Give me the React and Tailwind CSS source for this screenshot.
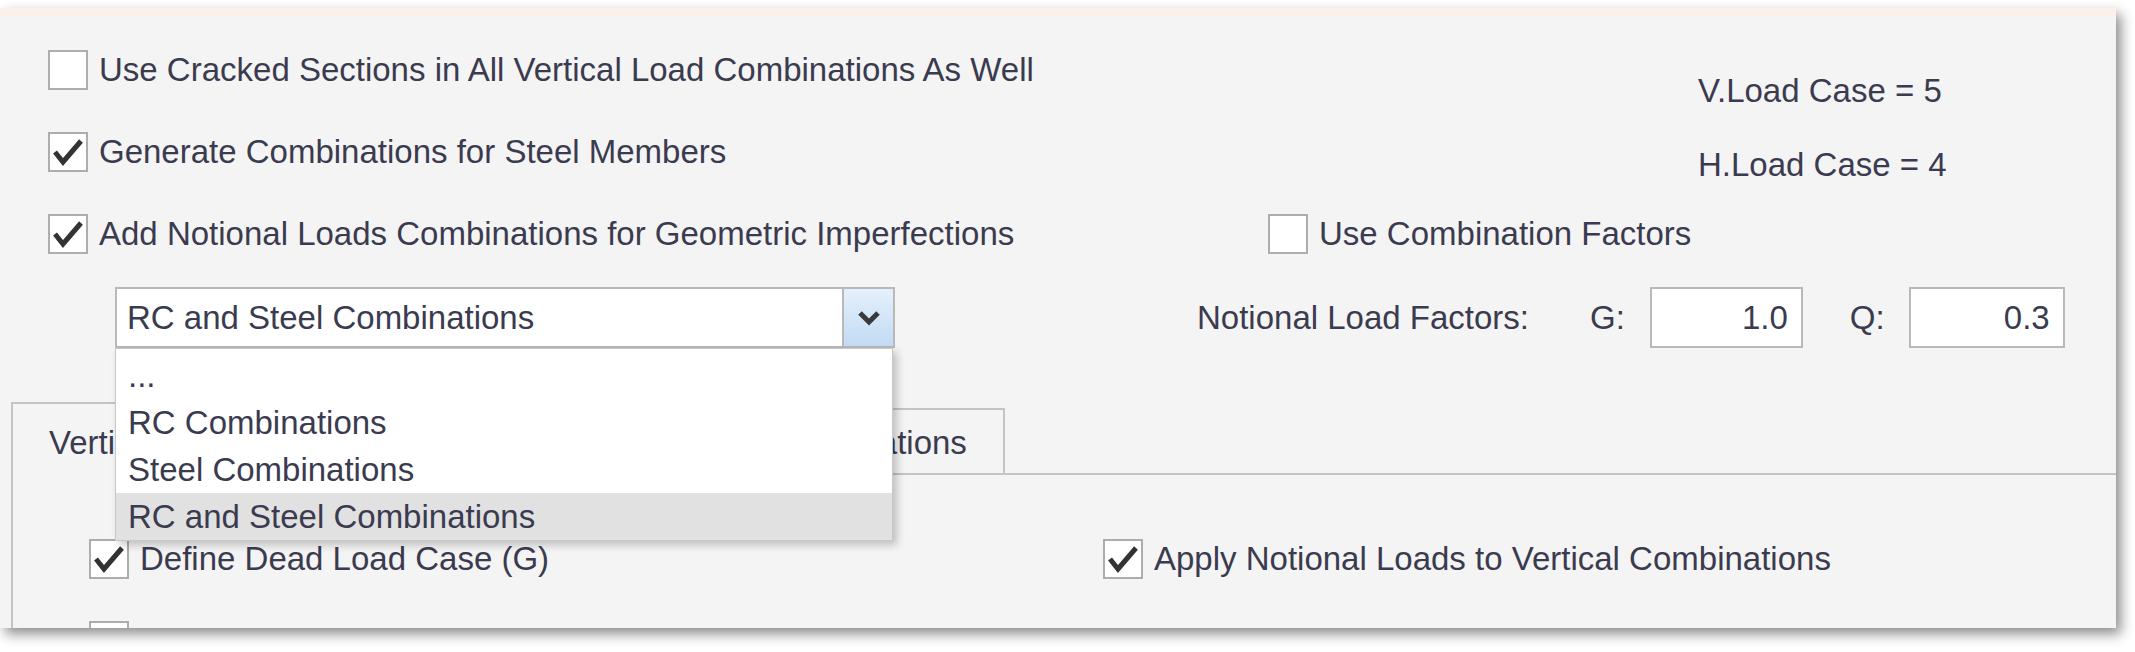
import React from "react";

const font = { fontFamily: '"Liberation Sans", Arial, sans-serif' };

function Check({ checked, size = "w-[40px] h-[40px]" }) {
  return (
    <div className={`${size} shrink-0 border-2 border-[#adadad] bg-white flex items-center justify-center`}>
      {checked && (
        <svg width="32" height="30" viewBox="0 0 32 30">
          <path d="M3 15 L11 25 L29 4" fill="none" stroke="#333333" strokeWidth="5" strokeLinecap="butt" strokeLinejoin="miter" />
        </svg>
      )}
    </div>
  );
}

function CheckRow({ checked, label, className = "" }) {
  return (
    <div className={`flex items-center h-[40px] ${className}`}>
      <Check checked={checked} />
      <span className="ml-[11px] whitespace-nowrap leading-[40px]">{label}</span>
    </div>
  );
}

export default function App() {
  return (
    <div
      className="w-[2135px] h-[652px] bg-white overflow-hidden pt-[8px] text-[33px] text-[#3b3b50]"
      style={font}
    >
      <div className="w-[2116px] h-[620px] bg-[#f4f4f4] border-t-[9px] border-[#fbf0ec] shadow-[5px_6px_12px_rgba(0,0,0,0.45)] overflow-hidden">
        {/* Top section */}
        <div className="flex h-[385px]">
          {/* Left column */}
          <div className="w-[1195px] shrink-0 pl-[48px] pt-[33px] flex flex-col">
            <CheckRow checked={false} label="Use Cracked Sections in All Vertical Load Combinations As Well" />
            <CheckRow checked label="Generate Combinations for Steel Members" className="mt-[42px]" />
            <CheckRow checked label="Add Notional Loads Combinations for Geometric Imperfections" className="mt-[42px]" />
            <div className="mt-[33px] ml-[67px] relative w-[780px] z-20">
              <div className="h-[61px] border-2 border-[#b9b9b9] bg-white flex">
                <div className="flex-1 pl-[10px] flex items-center whitespace-nowrap">RC and Steel Combinations</div>
                <div className="w-[51px] border-l-2 border-[#b9b9b9] bg-gradient-to-b from-[#e4f0fc] to-[#c3dbf4] flex items-center justify-center">
                  <svg width="24" height="18" viewBox="0 0 24 18">
                    <polyline points="3,4 12,13 21,4" fill="none" stroke="#3a3a3a" strokeWidth="5" />
                  </svg>
                </div>
              </div>
              {/* Open list */}
              <div className="absolute left-0 top-full w-[778px] bg-white border border-[#c8c8c8] pt-[3px] shadow-[4px_4px_8px_rgba(0,0,0,0.22)]">
                <div className="h-[47px] px-[12px] flex items-center">...</div>
                <div className="h-[47px] px-[12px] flex items-center">RC Combinations</div>
                <div className="h-[47px] px-[12px] flex items-center">Steel Combinations</div>
                <div className="h-[47px] px-[12px] flex items-center bg-[#e1e1e1]">RC and Steel Combinations</div>
              </div>
            </div>
          </div>

          {/* Right column */}
          <div className="flex-1 pt-[54px] flex flex-col">
            <div className="h-[40px] leading-[40px] ml-[503px] whitespace-nowrap">V.Load Case = 5</div>
            <div className="h-[40px] leading-[40px] ml-[503px] mt-[34px] whitespace-nowrap">H.Load Case = 4</div>
            <CheckRow checked={false} label="Use Combination Factors" className="ml-[73px] mt-[29px]" />
            <div className="mt-[33px] h-[61px] flex items-center whitespace-nowrap">
              <span className="ml-[2px]">Notional Load Factors:</span>
              <span className="ml-[61px]">G:</span>
              <div className="ml-[25px] w-[153px] h-[61px] border-2 border-[#b9b9b9] bg-white flex items-center justify-end pr-[13px]">1.0</div>
              <span className="ml-[47px]">Q:</span>
              <div className="ml-[24px] w-[156px] h-[61px] border-2 border-[#b9b9b9] bg-white flex items-center justify-end pr-[13px]">0.3</div>
            </div>
          </div>
        </div>

        {/* Tabs */}
        <div className="pl-[11px]">
          <div className="flex items-end">
            <div className="h-[73px] border-2 border-b-0 border-[#c4c4c4] bg-[#f4f4f4] px-[36px] pt-[19px] -mb-[2px] relative z-10 whitespace-nowrap leading-[40px]">
              Vertical Load Combinations
            </div>
            <div className="h-[65px] border-2 border-l-0 border-b-0 border-[#c4c4c4] bg-[#f4f4f4] px-[36px] pt-[13px] whitespace-nowrap leading-[40px]">
              Horizontal Load Combinations
            </div>
          </div>
          <div className="border-t-2 border-l-2 border-[#c4c4c4] h-[300px] pt-[64px]">
            <div className="flex">
              <div className="w-[1090px] shrink-0 pl-[76px]">
                <CheckRow checked label="Define Dead Load Case (G)" />
              </div>
              <CheckRow checked label="Apply Notional Loads to Vertical Combinations" />
            </div>
            <div className="flex mt-[42px]">
              <div className="w-[1090px] shrink-0 pl-[76px]">
                <CheckRow checked={false} label="Define Live Load Case (Q)" />
              </div>
            </div>
          </div>
        </div>
      </div>
    </div>
  );
}
